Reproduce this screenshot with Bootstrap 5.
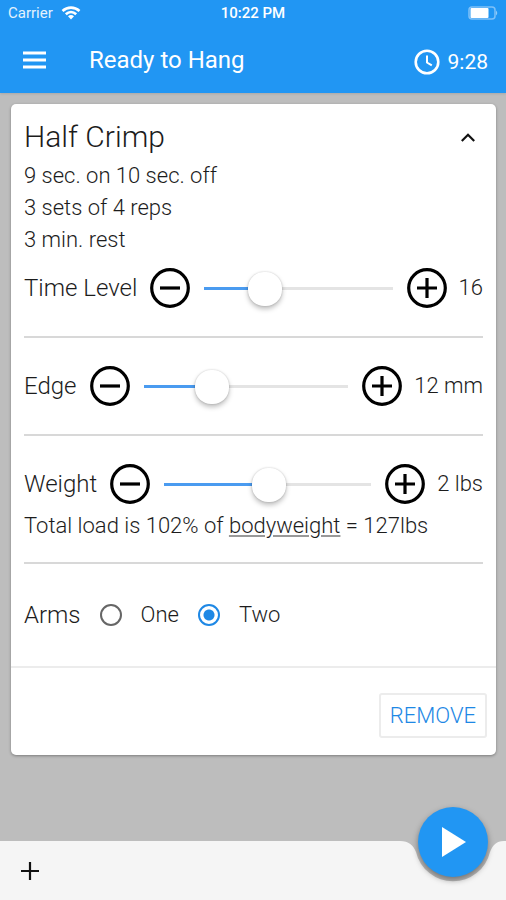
<!DOCTYPE html>
<html lang="en">
<head>
<meta charset="utf-8">
<meta name="viewport" content="width=device-width, initial-scale=1">
<title>Ready to Hang</title>
<link rel="stylesheet" href="https://cdn.jsdelivr.net/npm/bootstrap@5.3.0/dist/css/bootstrap.min.css">
<style>
  body { font-family: Roboto, "Liberation Sans", sans-serif; font-size: 22px; line-height: 32px; color: #1c1c1c; background: #bdbdbd; }
  svg { display: block; flex: none; }
  .app-top { background: #2196f3; color: #fff; box-shadow: 0 1px 2px #a9a9a9; }
  .status { display: grid; grid-template-columns: 1fr auto 1fr; height: 26px; padding: 0 8px; font-size: 15px; line-height: 26px; }
  .carrier { color: #e3f2fd; }
  .clock { font-size: 15px; font-weight: 500; }
  .toolbar { height: 67px; padding: 0 18px 0 22px; }
  .app-title { font-size: 24px; line-height: 32px; font-weight: 400; padding-left: 42px; }
  .elapsed { font-size: 21px; padding-top: 5px; }
  .plain { padding: 0; border: 0; background: none; color: inherit; }
  .hang-card { margin: 11px 10px 0 11px; border: 0; border-radius: 5px; color: inherit; font-weight: 350; box-shadow: 0 1px 3px rgba(0,0,0,.35); }
  .hang-body { padding: 16px 13px 35px; }
  .hang-title { font-size: 30px; line-height: 34px; font-weight: 300; }
  .plan { margin: 6px 0 12px; }
  .setting { height: 40px; gap: 12px; }
  .setting label, .arms-label { font-size: 24px; white-space: nowrap; }
  .setting label { margin-right: 1px; }
  .setting output { white-space: nowrap; font-weight: 300; }
  .rule { height: 2px; margin: 28px 0; border: 0; background: #d8d8d8; opacity: 1; }
  .form-range { flex: 1 1 0; min-width: 0; height: 36px; margin: 0 2px; }
  .form-range::-webkit-slider-runnable-track { height: 3px; border-radius: 0; background: linear-gradient(to right, #4a9bf0 var(--fill), #e4e4e4 var(--fill)); }
  .form-range::-webkit-slider-thumb { width: 34px; height: 34px; margin-top: -15px; background: #fff; box-shadow: 0 3px 5px rgba(0,0,0,.25), 0 0 2px rgba(0,0,0,.2); }
  .form-range::-webkit-slider-thumb:active { background: #fff; }
  .load { margin-top: 6px; }
  .load u { text-decoration-color: #999; text-decoration-thickness: 2px; text-underline-offset: 2px; }
  .load-rule { margin: 20px 0 0; }
  .arms-row { margin-top: 35px; gap: 19px; }
  .arms-row .form-check-input { float: none; width: 22px; height: 22px; margin: 0; border: 2px solid #666; background: #fff; flex: none; }
  .arms-row .form-check-input:checked { border-color: #1e88e5; background: radial-gradient(circle, #1e88e5 5px, #fff 6px); }
  .hang-foot { border-top: 2px solid #ececec; background: none; padding: 25px 9px 17px; }
  .remove { font-size: 22px; line-height: 32px; font-weight: 300; color: #1e88e5; padding: 5px 9px 4px; border: 2px solid #ececec; border-radius: 3px; }
  .bottom { height: 59px; }
  .bar-fill { background: #f5f5f5; padding-left: 20px; }
  .fab { top: -34px; right: 18px; width: 70px; height: 70px; border-radius: 50%; background: #2196f3; color: #fff; box-shadow: 0 3px 6px rgba(0,0,0,.4); }
</style>
<script src="https://cdn.jsdelivr.net/npm/bootstrap@5.3.0/dist/js/bootstrap.bundle.min.js"></script>
</head>
<body class="d-flex flex-column min-vh-100">
<header class="app-top">
  <div class="status">
    <div class="carrier d-flex align-items-center gap-2"><span>Carrier</span>
      <svg width="20" height="14" viewBox="0 0 20 14" fill="none" stroke="#fff" stroke-width="2.6"><path d="M1.5 5C6.500 .5 13.500 .5 18.500 5M4.800 8.300C8 5.300 12 5.300 15.200 8.300"/><path d="M7 10.200Q10 7.800 13 10.200L10 13.400Z" fill="#fff" stroke="none"/></svg>
    </div>
    <div class="clock">10:22 PM</div>
    <div class="d-flex align-items-center justify-content-end">
      <svg width="30" height="14" viewBox="0 0 30 14"><rect x="1" y="1" width="26" height="12" rx="3" fill="none" stroke="#7fc1f8" stroke-width="1.500"/><rect x="2.500" y="2" width="18" height="10" rx="1" fill="#fff"/><path d="M28 4.500Q30.500 7 28 9.500Z" fill="#90caf9"/></svg>
    </div>
  </div>
  <div class="toolbar d-flex align-items-center">
    <button class="plain" type="button" aria-label="Menu"><svg width="25" height="18" viewBox="0 0 25 18" stroke="#fff" stroke-width="3"><path d="M1 2H24M1 9H24M1 16H24"/></svg></button>
    <h1 class="app-title mb-0 flex-grow-1">Ready to Hang</h1>
    <div class="elapsed d-flex align-items-center gap-2">
      <svg width="26" height="26" viewBox="0 0 26 26" fill="none" stroke="#fff" stroke-width="2.600"><circle cx="13" cy="13" r="11.300"/><path d="M13 6.500V13.500L17.800 16.400" stroke-width="2"/></svg>
      <span>9:28</span>
    </div>
  </div>
</header>

<main class="flex-grow-1">
  <section class="card hang-card">
    <div class="card-body hang-body">
      <div class="d-flex justify-content-between align-items-center">
        <h2 class="hang-title mb-0">Half Crimp</h2>
        <button class="plain pe-2" type="button" aria-label="Collapse"><svg width="14" height="9" viewBox="0 0 14 9" fill="none" stroke="#111" stroke-width="2.200"><path d="M.8 8L7 1.800L13.200 8"/></svg></button>
      </div>
      <div class="plan">
        <div>9 sec. on 10 sec. off</div>
        <div>3 sets of 4 reps</div>
        <div>3 min. rest</div>
      </div>

      <div class="setting d-flex align-items-center">
        <label for="time">Time Level</label>
        <button class="plain" type="button" aria-label="Decrease time level"><svg width="40" height="40" viewBox="0 0 40 40" fill="none" stroke="#000" stroke-width="3.200"><circle cx="20" cy="20" r="18.300"/><path d="M10 20H30"/></svg></button>
        <input class="form-range" type="range" id="time" min="1" max="54" value="16" style="--fill:32%">
        <button class="plain" type="button" aria-label="Increase time level"><svg width="40" height="40" viewBox="0 0 40 40" fill="none" stroke="#000" stroke-width="3.200"><circle cx="20" cy="20" r="18.300"/><path d="M10 20H30M20 10V30"/></svg></button>
        <output for="time">16</output>
      </div>
      <hr class="rule">
      <div class="setting d-flex align-items-center">
        <label for="edge">Edge</label>
        <button class="plain" type="button" aria-label="Decrease edge"><svg width="40" height="40" viewBox="0 0 40 40" fill="none" stroke="#000" stroke-width="3.200"><circle cx="20" cy="20" r="18.300"/><path d="M10 20H30"/></svg></button>
        <input class="form-range" type="range" id="edge" min="6" max="26" value="12" style="--fill:33%">
        <button class="plain" type="button" aria-label="Increase edge"><svg width="40" height="40" viewBox="0 0 40 40" fill="none" stroke="#000" stroke-width="3.200"><circle cx="20" cy="20" r="18.300"/><path d="M10 20H30M20 10V30"/></svg></button>
        <output for="edge">12 mm</output>
      </div>
      <hr class="rule">
      <div class="setting d-flex align-items-center">
        <label for="weight">Weight</label>
        <button class="plain" type="button" aria-label="Decrease weight"><svg width="40" height="40" viewBox="0 0 40 40" fill="none" stroke="#000" stroke-width="3.200"><circle cx="20" cy="20" r="18.300"/><path d="M10 20H30"/></svg></button>
        <input class="form-range" type="range" id="weight" min="-50" max="52" value="2" style="--fill:51%">
        <button class="plain" type="button" aria-label="Increase weight"><svg width="40" height="40" viewBox="0 0 40 40" fill="none" stroke="#000" stroke-width="3.200"><circle cx="20" cy="20" r="18.300"/><path d="M10 20H30M20 10V30"/></svg></button>
        <output for="weight">2 lbs</output>
      </div>
      <div class="load">Total load is 102% of <u>bodyweight</u> = 127lbs</div>
      <hr class="rule load-rule">
      <div class="arms-row d-flex align-items-center" role="radiogroup" aria-labelledby="arms">
        <span class="arms-label" id="arms">Arms</span>
        <input class="form-check-input" type="radio" name="arms" id="one"><label for="one">One</label>
        <input class="form-check-input" type="radio" name="arms" id="two" checked><label for="two">Two</label>
      </div>
    </div>
    <div class="card-footer hang-foot d-flex justify-content-end">
      <button class="btn remove" type="button">REMOVE</button>
    </div>
  </section>
</main>

<footer class="bottom d-flex position-relative">
  <div class="bar-fill flex-grow-1 d-flex align-items-center">
    <button class="plain" type="button" aria-label="Add"><svg width="20" height="20" viewBox="0 0 20 20" stroke="#111" stroke-width="2.200"><path d="M1 10H19M10 1V19"/></svg></button>
  </div>
  <svg width="116" height="59" viewBox="0 0 116 59"><path d="M0 0H10C19 0 23 4 26 11A38 38 0 0 0 100 11C103 4 106 0 114 0H116V59H0Z" fill="#f5f5f5"/></svg>
  <button class="fab plain position-absolute d-flex align-items-center justify-content-center" type="button" aria-label="Start"><svg width="26" height="32" viewBox="0 0 26 32"><path d="M2 1L26 16L2 31Z" fill="#fff"/></svg></button>
</footer>
</body>
</html>
